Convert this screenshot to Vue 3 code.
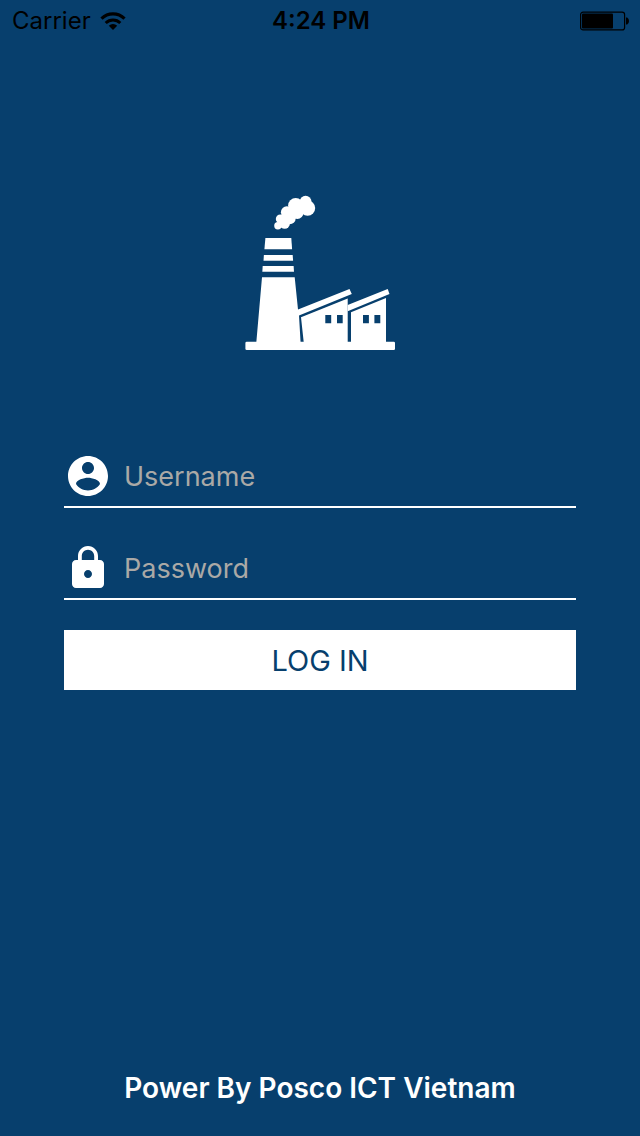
<script setup>
import { ref } from 'vue'

const username = ref('')
const password = ref('')
</script>

<template>
  <div class="screen">
    <header class="status">
      <div class="carrier">
        <span>Carrier</span>
        <svg class="wifi" viewBox="0 0 26 18" aria-hidden="true">
          <path d="M1.5 6.600a16.400 16.400 0 0 1 23 0" fill="none" stroke="#000" stroke-width="3.2" />
          <path d="M5.700 11a10.500 10.500 0 0 1 14.600 0" fill="none" stroke="#000" stroke-width="3" />
          <path d="M13 18l-4.200-4.200a6 6 0 0 1 8.400 0z" fill="#000" />
        </svg>
      </div>
      <time class="clock">4:24 PM</time>
      <div class="power">
        <svg class="battery" viewBox="0 0 50 20" aria-hidden="true">
          <rect x="0.6" y="1.1" width="44" height="17.8" rx="2.5" fill="none" stroke="#000" stroke-width="1.2" />
          <rect x="2" y="2.500" width="31" height="15" rx="1" />
          <path d="M46 6.500h1.200q1.800 1 1.800 3.500t-1.800 3.500h-1.200z" />
        </svg>
      </div>
    </header>

    <main class="content">
      <svg class="logo" viewBox="245 195 151 156" fill="#fff" role="img" aria-label="Factory">
        <circle cx="277.900" cy="225.700" r="3.700" />
        <circle cx="280.300" cy="218.900" r="4.500" />
        <circle cx="284.700" cy="223.600" r="5.200" />
        <circle cx="286.900" cy="212.200" r="6" />
        <circle cx="289.700" cy="218.200" r="6" />
        <circle cx="295.700" cy="205.600" r="7.600" />
        <circle cx="297.300" cy="212.600" r="6.300" />
        <circle cx="305.600" cy="201.700" r="5.900" />
        <circle cx="307.600" cy="208.100" r="7.600" />
        <path d="M278 224l8-10 14-12 5 6-10 10-12 7z" />
        <path d="M265.400 238h25.900l.8 11.300h-27.700z" />
        <path d="M263.900 255h28.800l.4 5.700h-29.600z" />
        <path d="M262.700 266h30.900l.4 5.700h-31.700z" />
        <path d="M262 277.300h32.700l3.300 32.200L349.500 289l2.300 5L299 315.500l1.600 27h-44.300z" />
        <path d="M347.700 305L387.700 289l1.800 5L347.700 311.300z" />
        <path fill-rule="evenodd" d="M301 317.300l46.700-18.800V342h-44zM325.300 315v8.300h5.900V315zM337 315v8.300h5.700V315z" />
        <path fill-rule="evenodd" d="M351 312.300l35-14.300v44h-35zM363 315v8.300h5.900V315zM374.400 315v8.300h5.900V315z" />
        <rect x="245.400" y="341.700" width="149.600" height="8.300" rx="1.300" />
      </svg>

      <form class="login" @submit.prevent>
        <div class="field">
          <label for="username" aria-label="Username">
            <svg class="icon" viewBox="0 0 24 24" aria-hidden="true">
              <path fill="#fff" d="M12 2C6.480 2 2 6.480 2 12s4.480 10 10 10 10-4.480 10-10S17.520 2 12 2zm0 3c1.660 0 3 1.340 3 3s-1.340 3-3 3-3-1.340-3-3 1.340-3 3-3zm0 14.200c-2.500 0-4.710-1.280-6-3.220.030-1.990 4-3.080 6-3.080 1.990 0 5.970 1.090 6 3.080-1.290 1.940-3.500 3.220-6 3.220z" />
            </svg>
          </label>
          <input id="username" v-model="username" type="text" placeholder="Username" autocomplete="username">
        </div>
        <div class="field">
          <label for="password" aria-label="Password">
            <svg class="icon" viewBox="0 0 24 24" aria-hidden="true">
              <path fill="#fff" d="M18 8h-1V6c0-2.760-2.240-5-5-5S7 3.240 7 6v2H6c-1.100 0-2 .9-2 2v10c0 1.100.9 2 2 2h12c1.100 0 2-.9 2-2V10c0-1.100-.9-2-2-2zm-6 9c-1.100 0-2-.9-2-2s.9-2 2-2 2 .9 2 2-.9 2-2 2zm3.100-9H8.900V6c0-1.710 1.390-3.100 3.100-3.100 1.710 0 3.100 1.390 3.100 3.100v2z" />
            </svg>
          </label>
          <input id="password" v-model="password" type="password" placeholder="Password" autocomplete="current-password">
        </div>
        <button type="submit">LOG IN</button>
      </form>
    </main>

    <footer class="footer">Power By Posco ICT Vietnam</footer>
  </div>
</template>

<style>
body {
  background: #073f6d;
}
</style>

<style scoped>
.screen {
  display: flex;
  flex-direction: column;
  min-height: 100vh;
  background: #073f6d;
  font-family: Inter, Roboto, sans-serif;
}

.status {
  display: grid;
  grid-template-columns: 1fr auto 1fr;
  align-items: center;
  height: 41px;
  padding: 0 10px 0 12px;
  color: #000;
  font-size: 24px;
  line-height: 41px;
}

.carrier {
  display: flex;
  align-items: center;
  gap: 9px;
}

.wifi {
  width: 26px;
  height: 18px;
}

.clock {
  font-weight: 600;
}

.power {
  display: flex;
  justify-content: flex-end;
}

.battery {
  width: 50px;
  height: 20px;
}

.content {
  flex: 1;
  display: flex;
  flex-direction: column;
  align-items: center;
  padding: 154px 10% 0;
}

.logo {
  width: 151px;
  height: 156px;
}

.login {
  display: flex;
  flex-direction: column;
  gap: 30px;
  width: 100%;
  margin-top: 95px;
}

.field {
  display: flex;
  align-items: center;
  gap: 12px;
  height: 60px;
  border-bottom: 2px solid #fff;
}

.icon {
  display: block;
  width: 48px;
  height: 48px;
}

.field input {
  flex: 1;
  min-width: 0;
  height: 48px;
  padding: 0;
  border: 0;
  outline: 0;
  background: transparent;
  color: #fff;
  font: 400 27px Inter, Roboto, sans-serif;
}

.field input::placeholder {
  color: #aaa9a6;
  opacity: 1;
}

button {
  height: 60px;
  padding: 0;
  border: 0;
  background: #fff;
  color: #073f6d;
  font: 400 29px Inter, Roboto, sans-serif;
  cursor: pointer;
}

.footer {
  padding: 0 20px 28px;
  color: #fff;
  font-size: 28px;
  font-weight: 600;
  line-height: 40px;
  text-align: center;
}
</style>
